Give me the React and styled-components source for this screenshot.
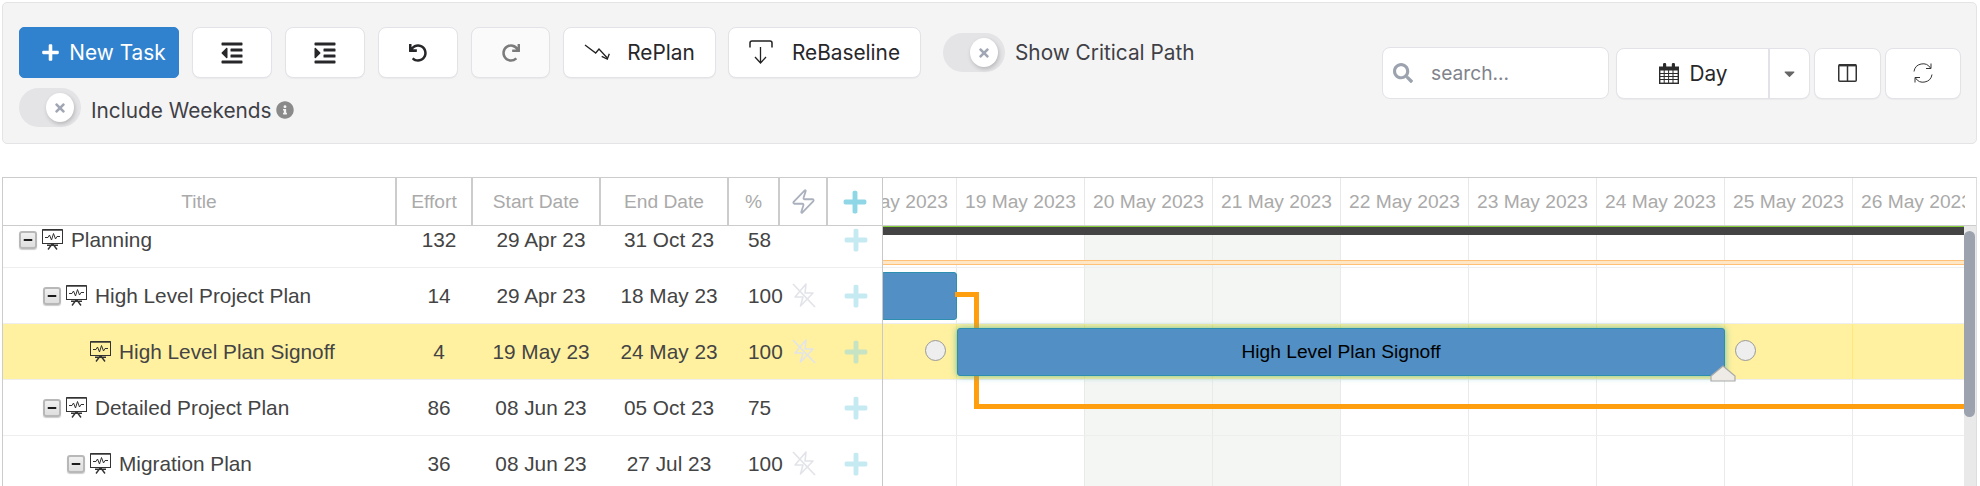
import React from "react";
import styled, { createGlobalStyle } from "styled-components";
import { FaPlus, FaOutdent, FaIndent, FaUndo, FaRedo, FaTimes, FaInfoCircle, FaSearch, FaCaretDown, FaMinus } from "react-icons/fa";
import { Zap } from "lucide-react";

const GlobalStyle = createGlobalStyle`
  * { box-sizing: border-box; }
  html, body { margin: 0; padding: 0; height: 100%; background: #fff; }
  #root { height: 100%; }
`;

const Page = styled.div`
  height: 100vh;
  display: flex;
  flex-direction: column;
  padding: 2px 3px 0 2px;
  overflow: hidden;
  font-family: Inter, "Liberation Sans", sans-serif;
`;

const Toolbar = styled.div`
  height: 142px;
  flex: none;
  display: flex;
  justify-content: space-between;
  padding: 24px 15px 0 16px;
  background: #f4f4f5;
  border: 1px solid #e4e4e7;
  border-radius: 5px;
`;

const LeftTools = styled.div`
  display: flex;
  flex-direction: column;
  gap: 10px;
`;

const ToolRow = styled.div`
  display: flex;
  align-items: flex-start;
`;

const RightTools = styled.div`
  display: flex;
  align-items: center;
  height: 52px;
  margin-top: 20px;
`;

const ToolButton = styled.button`
  height: 51px;
  width: ${(p) => p.$width || 80}px;
  margin-right: ${(p) => p.$gap ?? 13}px;
  display: flex;
  align-items: center;
  justify-content: center;
  gap: ${(p) => p.$iconGap || 0}px;
  padding: 0;
  background: ${(p) => (p.$disabled ? "#fafafa" : "#fff")};
  color: ${(p) => (p.$disabled ? "#7b7b7b" : "#27272a")};
  border: 1px solid #e2e2e8;
  border-radius: 8px;
  box-shadow: 0 1px 1px rgba(0, 0, 0, 0.04);
  font-family: inherit;
  font-size: 20.8px;
  font-weight: 400;
  white-space: nowrap;
`;

const PrimaryButton = styled(ToolButton)`
  background: #3182ce;
  border-color: #3182ce;
  color: #fff;
  border-radius: 5px;
  gap: 9px;
  padding-left: 9px;
  box-shadow: none;
`;

const ToggleTrack = styled.div`
  position: relative;
  flex: none;
  width: 62px;
  height: 39px;
  border-radius: 20px;
  background: #e4e4e7;
`;

const ToggleKnob = styled.div`
  position: absolute;
  left: 27px;
  top: 5px;
  width: 28px;
  height: 29px;
  border-radius: 50%;
  background: #fff;
  box-shadow: 1px 2px 4px rgba(0, 0, 0, 0.2);
  display: flex;
  align-items: center;
  justify-content: center;
  color: #a0a6b4;
  font-size: 14px;
`;

const ToggleWrap = styled.div`
  display: flex;
  align-items: center;
  gap: 10px;
  height: ${(p) => p.$height || 39}px;
  font-size: 20.8px;
  color: #3f3f46;
  white-space: nowrap;
`;

const ToggleLabel = styled.span`
  display: flex;
  align-items: center;
  gap: 4px;
  padding-top: ${(p) => p.$drop || 0}px;
`;

const InfoIcon = styled(FaInfoCircle)`
  color: #8a8a8a;
  font-size: 18px;
`;

const SearchBox = styled.label`
  width: 227px;
  height: 52px;
  display: flex;
  align-items: center;
  gap: 18px;
  padding-left: 10px;
  margin-right: 7px;
  background: #fff;
  border: 1px solid #e2e2e8;
  border-radius: 8px;
  color: #9ca3af;
  font-size: 20px;
`;

const SearchInput = styled.input`
  width: 150px;
  border: 0;
  outline: 0;
  padding: 0;
  background: transparent;
  font-family: inherit;
  font-size: 19.2px;
  &::placeholder { color: #81848c; opacity: 1; }
`;

const RangeGroup = styled.div`
  display: flex;
  height: 51px;
  margin-right: 4px;
  background: #fff;
  border: 1px solid #e2e2e8;
  border-radius: 8px;
  box-shadow: 0 1px 1px rgba(0, 0, 0, 0.04);
`;

const RangeMain = styled.div`
  width: 153px;
  display: flex;
  align-items: center;
  justify-content: center;
  gap: 10px;
  padding-left: 2px;
  border-right: 2px solid #e2e2e8;
  color: #27272a;
  font-size: 20.8px;
`;

const RangeCaret = styled.div`
  width: 39px;
  display: flex;
  align-items: center;
  justify-content: center;
  color: #666;
  font-size: 17px;
`;

const Gantt = styled.div`
  flex: 1;
  min-height: 0;
  margin-top: 33px;
  display: flex;
  border-top: 1px solid #ccc;
  border-right: 1px solid #ddd;
  border-left: 1px solid #ccc;
`;

const TaskPanel = styled.div`
  flex: none;
  width: 880px;
  display: flex;
  flex-direction: column;
  border-right: 1px solid #c8c8c8;
  overflow: hidden;
`;

const TaskHeader = styled.div`
  flex: none;
  height: 48px;
  display: grid;
  grid-template-columns: 394px 76px 128px 128px 51px 48px 1fr;
  border-bottom: 1px solid #ccc;
`;

const HeaderCell = styled.div`
  display: flex;
  align-items: center;
  justify-content: center;
  border-right: ${(p) => (p.$last ? "0" : "2px solid #ccc")};
  color: #aaa;
  font-family: "Liberation Sans", Arial, sans-serif;
  font-size: 19.2px;
`;

const Rows = styled.div`
  flex: 1;
  min-height: 0;
  overflow: hidden;
`;

const RowsInner = styled.div`
  margin-top: -14px;
`;

const TaskRow = styled.div`
  height: 56px;
  display: grid;
  grid-template-columns: 398px 76px 128px 128px 50px 42px 1fr;
  align-items: center;
  background: ${(p) => (p.$active ? "#fff1a0" : "#fff")};
  border-bottom: 1px solid #eee;
  color: #444;
  font-family: "Liberation Sans", Arial, sans-serif;
  font-size: 20.8px;
`;

const TitleCell = styled.div`
  display: flex;
  align-items: center;
  padding-left: ${(p) => 16 + p.$level * 24}px;
`;

const TreeToggle = styled.span`
  flex: none;
  width: 18px;
  height: 18px;
  margin-right: 5px;
  display: flex;
  align-items: center;
  justify-content: center;
  background: linear-gradient(#f0f0f0, #dedede);
  border: 2px solid #b8b8b8;
  border-radius: 3px;
  box-shadow: 0 1px 1px rgba(0, 0, 0, 0.2);
  color: #1c1c1c;
  font-size: 10px;
`;

const TreeSpacer = styled.span`
  flex: none;
  width: 23px;
`;

const TaskTitle = styled.span`
  margin-left: 8px;
  white-space: nowrap;
`;

const NumCell = styled.div`
  text-align: center;
`;

const PctCell = styled.div`
  padding-left: 15px;
`;

const IconCell = styled.div`
  display: flex;
  justify-content: center;
  padding-left: ${(p) => p.$offset || 0}px;
`;

const AddIcon = styled(FaPlus)`
  color: #8fd6e6;
  opacity: ${(p) => p.$opacity ?? 1};
  font-size: 26px;
`;

const Timeline = styled.div`
  flex: 1;
  min-width: 0;
  display: flex;
  flex-direction: column;
`;

const TimeHeaderWrap = styled.div`
  flex: none;
  height: 48px;
  padding-right: 11px;
  border-bottom: 1px solid #ccc;
`;

const TimeHeader = styled.div`
  height: 100%;
  display: flex;
  overflow: hidden;
`;

const DayCell = styled.div`
  flex: none;
  width: 128px;
  height: 100%;
  display: flex;
  align-items: center;
  justify-content: center;
  border-right: 1px solid #e8e8e8;
  color: #aaa;
  font-family: "Liberation Sans", Arial, sans-serif;
  font-size: 19.2px;
  white-space: nowrap;
  &:first-child { margin-left: -54px; }
`;

const TimeBody = styled.div`
  flex: 1;
  min-height: 0;
  display: flex;
`;

const Canvas = styled.div`
  position: relative;
  flex: 1;
  min-width: 0;
  overflow: hidden;
`;

const GridRow = styled.div`
  height: 56px;
  display: flex;
  background: ${(p) => (p.$active ? "#fff1a0" : "transparent")};
  border-bottom: 1px solid #eee;
`;

const GridCell = styled.div`
  flex: none;
  width: 128px;
  border-right: 1px solid ${(p) => (p.$active ? "#ffe97a" : "#eaeaea")};
  background: ${(p) => (p.$weekend && !p.$active ? "#f4f6f4" : "transparent")};
  &:first-child { margin-left: -54px; }
`;

const SummaryBar = styled.div`
  position: absolute;
  left: 0;
  right: 0;
  top: 0;
  height: 9px;
  background: #444;
  border-top: 1px solid #86d03c;
`;

const BaselineBar = styled.div`
  position: absolute;
  left: 0;
  right: 0;
  top: 34px;
  height: 5px;
  background: #ffe6c4;
  border-top: 1px solid #ffc078;
  border-bottom: 1px solid #ffc078;
`;

const TaskBar = styled.div`
  position: absolute;
  left: ${(p) => p.$left}px;
  top: ${(p) => p.$top}px;
  width: ${(p) => p.$width}px;
  height: 48px;
  display: flex;
  align-items: center;
  justify-content: center;
  background: #518fc4;
  border: 1px solid #2c8fb0;
  border-radius: 3px;
  box-shadow: ${(p) => (p.$glow ? "0 0 7px rgba(50, 170, 170, 0.7)" : "none")};
  color: #000;
  font-family: "Liberation Sans", Arial, sans-serif;
  font-size: 19.2px;
`;

const Connector = styled.svg`
  position: absolute;
  left: 0;
  top: 0;
  width: 1082px;
  height: 260px;
`;

const LinkDot = styled.div`
  position: absolute;
  left: ${(p) => p.$left}px;
  top: 114px;
  width: 21px;
  height: 21px;
  border-radius: 50%;
  background: #eee;
  border: 1px solid #999;
`;

const ProgressHandle = styled.svg`
  position: absolute;
  left: 827px;
  top: 139px;
  width: 26px;
  height: 17px;
`;

const ScrollTrack = styled.div`
  flex: none;
  width: 12px;
  padding-top: 5px;
  background: #e9e9e9;
`;

const ScrollThumb = styled.div`
  width: 11px;
  height: 186px;
  border-radius: 6px;
  background: #9ca3af;
`;

const Board = () => (
  <svg width="21" height="21" viewBox="0 0 21 21" fill="none" stroke="#333" strokeWidth="1">
    <rect x="0.5" y="0.8" width="20" height="13.7" />
    <path d="M0.5 0.8H20.5" strokeWidth="1.6" />
    <path d="M3 8.5H6L7.5 6L9.5 11L11.5 4.5L13.5 10L15 7.5H18" />
    <path d="M10.5 14.5L6 20.5M10.5 14.5L15 20.5M5 16.2H16" strokeWidth="1.4" />
  </svg>
);

const RePlanIcon = () => (
  <svg width="27" height="17" viewBox="0 0 27 17" fill="none" stroke="#222" strokeWidth="1.3">
    <path d="M1 1L11.7 9L15 5L23.3 14" />
    <path d="M17.7 12.3L23.3 15L25.3 9.7" />
  </svg>
);

const ReBaselineIcon = () => (
  <svg width="24" height="25" viewBox="0 0 24 25" fill="none" stroke="#222" strokeWidth="1.3">
    <path d="M1 7.5V3a2 2 0 0 1 2-2H21a2 2 0 0 1 2 2V7.5" strokeWidth="1.5" />
    <path d="M11.5 7V23M6 17L11.5 23L17 17" />
  </svg>
);

const CalendarIcon = () => (
  <svg width="20" height="21" viewBox="0 0 20 21" fill="#2b2b2b">
    <path d="M0 3.5H4V1.5a1.6 1.6 0 0 1 3.2 0V3.5H12.8V1.5a1.6 1.6 0 0 1 3.2 0V3.5H20V21H0Z" />
    <path d="M1.4 7.5H18.6V19.6H1.4Z" fill="#fff" />
    <path d="M1 10.5H19M1 13.5H19M1 16.5H19M5.2 7V20M9.6 7V20M14 7V20" stroke="#2b2b2b" strokeWidth="1" fill="none" />
  </svg>
);

const ColumnsIcon = () => (
  <svg width="19" height="18" viewBox="0 0 19 18" fill="none" stroke="#333" strokeWidth="1.5">
    <rect x="0.75" y="1" width="17.5" height="16.2" rx="1" />
    <path d="M0.75 1.2H18.25" strokeWidth="2.4" />
    <path d="M9.5 2V17" />
  </svg>
);

const SyncIcon = () => (
  <svg width="22" height="22" viewBox="0 0 22 22" fill="none" stroke="#333" strokeWidth="1">
    <path d="M2 9.5A9 9 0 0 1 18.5 6M20 12.5A9 9 0 0 1 3.5 16" />
    <path d="M19 1.5V6.5H14M3 20.5V15.5H8" />
  </svg>
);

const BoltOff = () => (
  <svg width="24" height="25" viewBox="0 0 24 25" fill="none" stroke="#e2e4e9" strokeWidth="1.6" strokeLinejoin="round">
    <path d="M14 1L3 14H11L8.5 23L21 10H13Z" />
    <path d="M1 1L23 24" strokeWidth="1.8" />
  </svg>
);

const tasks = [
  { title: "Planning", level: 0, tree: true, effort: "132", start: "29 Apr 23", end: "31 Oct 23", pct: "58" },
  { title: "High Level Project Plan", level: 1, tree: true, effort: "14", start: "29 Apr 23", end: "18 May 23", pct: "100", off: true },
  { title: "High Level Plan Signoff", level: 2, active: true, effort: "4", start: "19 May 23", end: "24 May 23", pct: "100", off: true },
  { title: "Detailed Project Plan", level: 1, tree: true, effort: "86", start: "08 Jun 23", end: "05 Oct 23", pct: "75" },
  { title: "Migration Plan", level: 2, tree: true, effort: "36", start: "08 Jun 23", end: "27 Jul 23", pct: "100", off: true },
];

const days = ["18", "19", "20", "21", "22", "23", "24", "25", "26"];
const weekendDays = ["20", "21"];

const Toggle = ({ children, height }) => (
  <ToggleWrap $height={height}>
    <ToggleTrack>
      <ToggleKnob><FaTimes /></ToggleKnob>
    </ToggleTrack>
    {children}
  </ToggleWrap>
);

const App = () => {
  return (
    <>
      <GlobalStyle />
      <Page>
        <Toolbar>
          <LeftTools>
            <ToolRow>
              <PrimaryButton $width={160}><FaPlus size={19} /> New Task</PrimaryButton>
              <ToolButton><FaOutdent size={24} /></ToolButton>
              <ToolButton><FaIndent size={24} /></ToolButton>
              <ToolButton><FaUndo size={18} /></ToolButton>
              <ToolButton $disabled $width={79}><FaRedo size={18} /></ToolButton>
              <ToolButton $width={153} $gap={12} $iconGap={16}><RePlanIcon /> RePlan</ToolButton>
              <ToolButton $width={193} $gap={22} $iconGap={19}><ReBaselineIcon /> ReBaseline</ToolButton>
              <Toggle height={51}><ToggleLabel>Show Critical Path</ToggleLabel></Toggle>
            </ToolRow>
            <ToolRow>
              <Toggle><ToggleLabel $drop={5}>Include Weekends <InfoIcon /></ToggleLabel></Toggle>
            </ToolRow>
          </LeftTools>
          <RightTools>
            <SearchBox>
              <FaSearch />
              <SearchInput placeholder="search..." />
            </SearchBox>
            <RangeGroup>
              <RangeMain><CalendarIcon /> Day</RangeMain>
              <RangeCaret><FaCaretDown /></RangeCaret>
            </RangeGroup>
            <ToolButton $width={67} $gap={4}><ColumnsIcon /></ToolButton>
            <ToolButton $width={76} $gap={0}><SyncIcon /></ToolButton>
          </RightTools>
        </Toolbar>

        <Gantt>
          <TaskPanel>
            <TaskHeader>
              <HeaderCell>Title</HeaderCell>
              <HeaderCell>Effort</HeaderCell>
              <HeaderCell>Start Date</HeaderCell>
              <HeaderCell>End Date</HeaderCell>
              <HeaderCell>%</HeaderCell>
              <HeaderCell><Zap size={27} color="#aab0bd" strokeWidth={1.6} /></HeaderCell>
              <HeaderCell $last><AddIcon /></HeaderCell>
            </TaskHeader>
            <Rows>
              <RowsInner>
                {tasks.map((task) => (
                  <TaskRow key={task.title} $active={task.active}>
                    <TitleCell $level={task.level}>
                      {task.tree ? <TreeToggle><FaMinus /></TreeToggle> : <TreeSpacer />}
                      <Board />
                      <TaskTitle>{task.title}</TaskTitle>
                    </TitleCell>
                    <NumCell>{task.effort}</NumCell>
                    <NumCell>{task.start}</NumCell>
                    <NumCell>{task.end}</NumCell>
                    <PctCell>{task.pct}</PctCell>
                    <IconCell>{task.off && <BoltOff />}</IconCell>
                    <IconCell $offset={5}><AddIcon $opacity={0.5} /></IconCell>
                  </TaskRow>
                ))}
              </RowsInner>
            </Rows>
          </TaskPanel>

          <Timeline>
            <TimeHeaderWrap>
              <TimeHeader>
                {days.map((day) => (
                  <DayCell key={day}>{day} May 2023</DayCell>
                ))}
              </TimeHeader>
            </TimeHeaderWrap>
            <TimeBody>
              <Canvas>
                <RowsInner>
                  {tasks.map((task) => (
                    <GridRow key={task.title} $active={task.active}>
                      {days.map((day) => (
                        <GridCell key={day} $active={task.active} $weekend={weekendDays.includes(day)} />
                      ))}
                    </GridRow>
                  ))}
                </RowsInner>
                <SummaryBar />
                <BaselineBar />
                <TaskBar $left={-2} $top={46} $width={76} />
                <Connector viewBox="0 0 1082 260" fill="none">
                  <path d="M72 68.5H93.5V180.5H1082" stroke="#ff9f10" strokeWidth="5" />
                </Connector>
                <TaskBar $left={74} $top={102} $width={768} $glow>High Level Plan Signoff</TaskBar>
                <LinkDot $left={42} />
                <LinkDot $left={852} />
                <ProgressHandle viewBox="0 0 26 17">
                  <path d="M13 1L25 11V16H1V11Z" fill="#eeebe6" stroke="#aaa" strokeWidth="1.2" strokeLinejoin="round" />
                </ProgressHandle>
              </Canvas>
              <ScrollTrack><ScrollThumb /></ScrollTrack>
            </TimeBody>
          </Timeline>
        </Gantt>
      </Page>
    </>
  );
};

export default App;
